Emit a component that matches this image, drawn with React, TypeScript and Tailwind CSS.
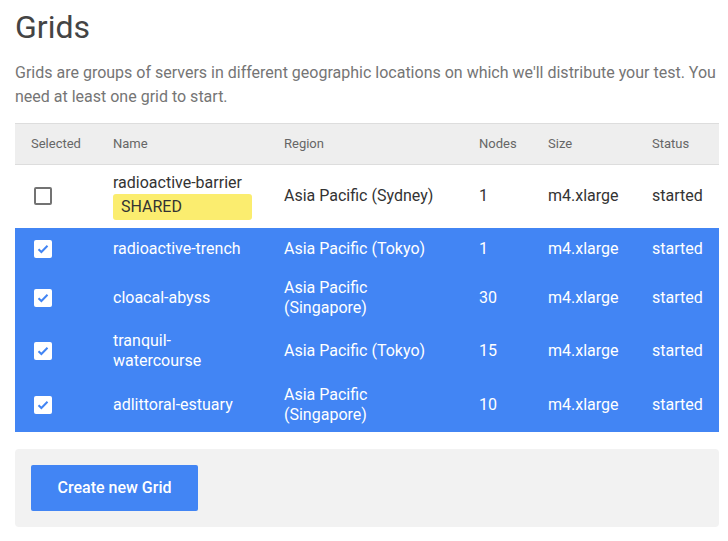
import React from "react";

interface Grid {
  name: string;
  region: string;
  nodes: number;
  size: string;
  status: string;
  selected: boolean;
  shared?: boolean;
  h: string;
}

const grids: Grid[] = [
  { name: "radioactive-barrier", region: "Asia Pacific (Sydney)", nodes: 1, size: "m4.xlarge", status: "started", selected: false, shared: true, h: "h-[63px]" },
  { name: "radioactive-trench", region: "Asia Pacific (Tokyo)", nodes: 1, size: "m4.xlarge", status: "started", selected: true, h: "h-[43px]" },
  { name: "cloacal-abyss", region: "Asia Pacific (Singapore)", nodes: 30, size: "m4.xlarge", status: "started", selected: true, h: "h-[54px]" },
  { name: "tranquil-watercourse", region: "Asia Pacific (Tokyo)", nodes: 15, size: "m4.xlarge", status: "started", selected: true, h: "h-[53px]" },
  { name: "adlittoral-estuary", region: "Asia Pacific (Singapore)", nodes: 10, size: "m4.xlarge", status: "started", selected: true, h: "h-[54px]" },
];

function Checkbox({ checked }: { checked: boolean }) {
  if (checked) {
    return (
      <div className="w-[18px] h-[18px] rounded-[2px] bg-white flex items-center justify-center">
        <svg width="12" height="10" viewBox="0 0 12 10">
          <path d="M1.5 5.2 L4.4 8 L10.5 1.8" fill="none" stroke="#4285f4" strokeWidth="2" />
        </svg>
      </div>
    );
  }
  return <div className="w-[18px] h-[18px] rounded-[2px] border-2 border-[#737373]" />;
}

export default function App() {
  return (
    <div className="pl-[15px] pt-[7px] font-['Roboto',sans-serif] bg-white min-h-[541px]">
      <h1 className="text-[32px] leading-[40px] font-normal text-[#444444]">Grids</h1>
      <p className="mt-[14px] w-[704px] text-[16px] leading-[24px] text-[#757575]">
        Grids are groups of servers in different geographic locations on which we'll distribute your test. You need at least one grid to start.
      </p>

      <table className="mt-[14px] w-[704px] table-fixed border-collapse text-left">
        <colgroup>
          <col className="w-[82px]" />
          <col className="w-[171px]" />
          <col className="w-[195px]" />
          <col className="w-[69px]" />
          <col className="w-[104px]" />
          <col className="w-[83px]" />
        </colgroup>
        <thead>
          <tr className="h-[41px] bg-[#eeeeee] border-t border-b border-[#dddddd] text-[13px] text-[#666666]">
            <th className="pl-4 font-normal">Selected</th>
            <th className="pl-4 font-normal">Name</th>
            <th className="pl-4 font-normal">Region</th>
            <th className="pl-4 font-normal">Nodes</th>
            <th className="pl-4 font-normal">Size</th>
            <th className="pl-4 font-normal">Status</th>
          </tr>
        </thead>
        <tbody className="text-[16px] leading-[20px]">
          {grids.map((g) => (
            <tr
              key={g.name}
              className={`${g.h} ${g.selected ? "bg-[#4285f4] text-white" : "bg-white text-[#333333]"}`}
            >
              <td className="pl-[19px]">
                <Checkbox checked={g.selected} />
              </td>
              <td className="pl-4 pr-4">
                <div>{g.name}</div>
                {g.shared && (
                  <div className="mt-[1px] h-[26px] rounded-[3px] bg-[#fbed6f] pl-[8px] flex items-center text-[#333333]">
                    SHARED
                  </div>
                )}
              </td>
              <td className="pl-4 pr-4">{g.region}</td>
              <td className="pl-4">{g.nodes}</td>
              <td className="pl-4">{g.size}</td>
              <td className="pl-4">{g.status}</td>
            </tr>
          ))}
        </tbody>
      </table>

      <div className="mt-[17px] w-[704px] rounded-[4px] bg-[#f2f2f2] p-4">
        <button className="w-[167px] h-[46px] rounded-[2px] bg-[#4285f4] text-white text-[16px] font-medium">
          Create new Grid
        </button>
      </div>
    </div>
  );
}
